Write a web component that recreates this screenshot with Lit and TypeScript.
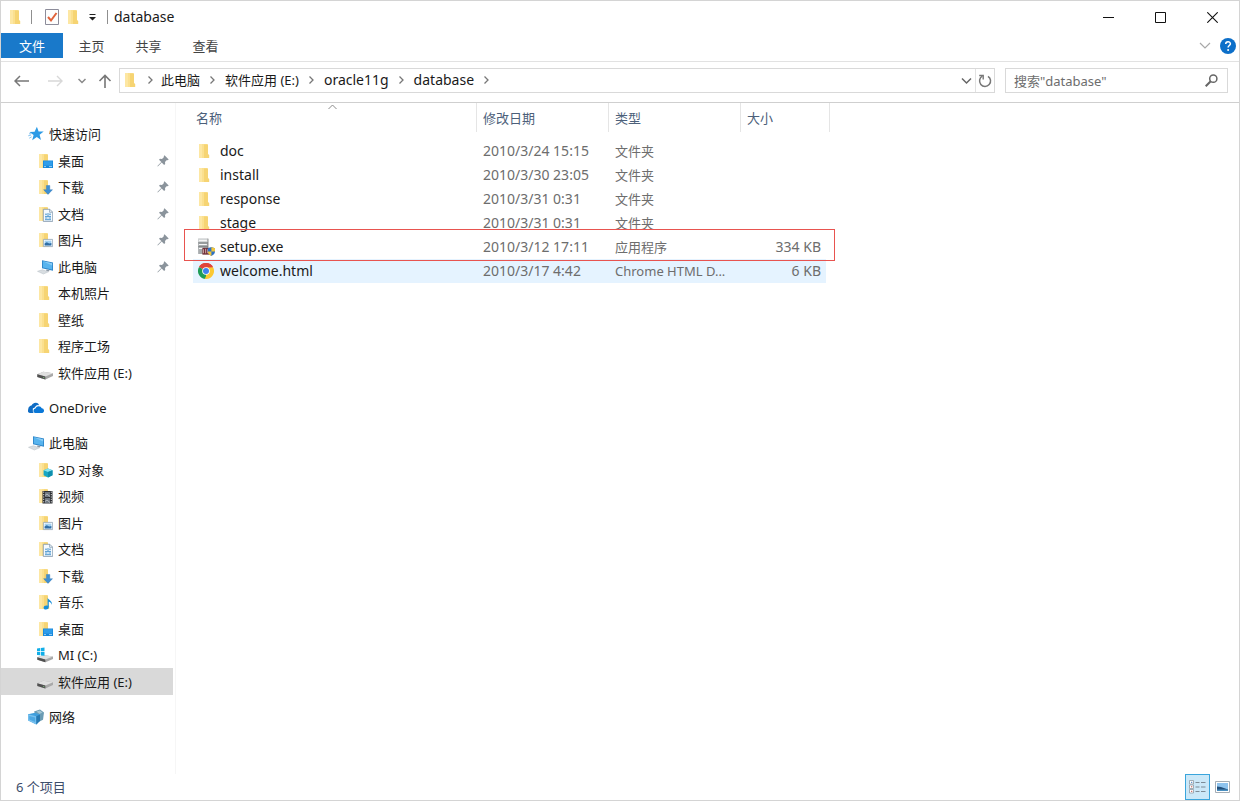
import { LitElement, html, svg, css, nothing, TemplateResult } from "lit";
import { customElement, state } from "lit/decorators.js";
import { classMap } from "lit/directives/class-map.js";

type IconName =
  | "folder" | "desktop" | "download" | "document" | "picture" | "pc" | "drive" | "sysdrive"
  | "star" | "onedrive" | "objects" | "video" | "music" | "network" | "setup" | "chrome";

interface Place { icon: IconName; label: string; pinned?: boolean; current?: boolean; }
interface Group { icon: IconName; label: string; items: Place[]; }
interface Entry { icon: IconName; name: string; date: string; type: string; size: string; boxed?: boolean; hot?: boolean; }

const folderBase = svg`
  <path d="M2 1h8.500v11l1.500 1v2H2z" fill="#fbe08f"/>
  <path d="M2 1h3v14H2z" fill="#fde7a3"/>
  <path d="M7 1.600h4V11l1.200 1v3H7z" fill="#f6d473"/>`;

const glyphs: Record<IconName, TemplateResult> = {
  folder: svg`${folderBase}`,
  desktop: svg`${folderBase}<path d="M6 7.5h10V15H6z" fill="#1487dc"/><path d="M6.7 8.2h8.6v4.4H6.7z" fill="#2f9dea"/><path d="M7 13.6h2M12 13.6h3" stroke="#bfe2fa" stroke-width=".8"/>`,
  download: svg`${folderBase}<path d="M9.4 6.5h3.4v4.2h2.7L11 15.4l-4.4-4.7h2.8z" fill="#3f8fd2" stroke="#2b74b5" stroke-width=".4"/>`,
  document: svg`${folderBase}<path d="M6.3 3.3h6.5l2.9 2.9v9.2H6.3z" fill="#f5fafe" stroke="#7c93a8" stroke-width=".8"/><path d="M12.6 3.4v2.9h3" fill="none" stroke="#7c93a8" stroke-width=".7"/><path d="M8 8.2h2M11 7v3M12 8.2h2M8 10.4h6M8 12h2.5M11.5 12H14M8 13.7h6" stroke="#3b8ccb" stroke-width=".9"/>`,
  picture: svg`${folderBase}<path d="M6.4 7.4h9.2v7.2H6.4z" fill="#fff" stroke="#8fa3b5" stroke-width=".8"/><path d="M7.6 8.6h6.8v4.8H7.6z" fill="#9fd0f2"/><path d="M7.6 13.4v-2l2.2-1.2 2.4 1.4 2.2-.6v2.4z" fill="#2f6da5"/>`,
  pc: svg`<path d="M5 1.2 16 3.4v8.4L5 9.2z" fill="#2e86c9"/><path d="M5.9 2.3l9.2 1.9v6.3L5.9 8.5z" fill="#58b4ee"/><path d="M5.9 2.3l9.2 1.9v2.2z" fill="#8accf5"/><path d="M9.5 10.4l3 .7-.5 1.4-3-.8z" fill="#8e9aa5"/><path d="M.5 12.3l4.8-1.5 6.2 2L6.4 15z" fill="#d8dde1" stroke="#b6bec5" stroke-width=".5"/>`,
  drive: svg`<path d="M.3 9.3l6-2.600 9.700 1.600v2.800L8.400 14.500 .3 11.900z" fill="#a9a9a9"/><path d="M.3 9.3l6-2.600 9.700 1.600-7.700 3.100z" fill="#e0e0e0"/><path d="M.3 9.3l8 2.100V14.500L.3 11.900z" fill="#505050"/><path d="M6.200 12.500l1.200.3" stroke="#8be08b" stroke-width=".8"/>`,
  sysdrive: svg`<path d="M.3 10.3l6-2.4 9.7 1.6v2.4l-7.6 3.3-8.1-2.4z" fill="#a9a9a9"/><path d="M.3 10.3l6-2.4 9.7 1.6-7.7 3.1z" fill="#e0e0e0"/><path d="M.3 10.3l8 2.3v2.6l-8-2.4z" fill="#505050"/><path d="M0 1.5l3.2-.4v3.2H0zM3.9 1l3.6-.5v3.8H3.9zM0 5h3.2v3.3L0 7.9zM3.9 5h3.6v3.8l-3.6-.4z" fill="#11aee8"/>`,
  star: svg`<path d="M8.9.7l1.7 4.8 5.1.1-4.1 3.2 1.4 5.1-4.2-2.9-4.6 3.3L5.6 9 1.4 6l5.200-.3z" fill="#2d9be6"/><path d="M.2 9.8l3-.8M1.200 12.200l2.500-1.400M1 7.800h2" stroke="#7fc0ee" stroke-width=".9"/>`,
  onedrive: svg`<path d="M5.8 10.8a3 3 0 0 1 .3-5.1 4.3 4.3 0 0 0-6 4 2.3 2.3 0 0 0 2 3.3h3.2a4 4 0 0 1 .5-2.2z" fill="#0f6cc4"/><path d="M3.4 6.4A4.2 4.2 0 0 1 10.6 4l.6 1.2C8.4 4.800 7.300 6.500 7 7.700 5.700 7.500 4.600 8.300 4.200 9.400z" fill="#0f6cc4"/><path d="M6.700 13a2.300 2.300 0 0 1 .8-4.500 3.400 3.400 0 0 1 6.300-.2 2.400 2.400 0 0 1 .5 4.700z" fill="#0a78d8"/><path d="M6 12.600a2.800 2.800 0 0 1 .9-4.500A3.700 3.700 0 0 1 12 5.600" fill="none" stroke="#fff" stroke-width=".7"/>`,
  objects: svg`${folderBase}<path d="M11 6.500l4.500 1.700v5L11 15.500l-4.400-2.300v-5z" fill="#18a7c4"/><path d="M11 6.500l4.500 1.700L11 10 6.600 8.200z" fill="#8be4f0"/><path d="M11 10l4.500-1.800v5L11 15.500z" fill="#0f8fae"/>`,
  video: svg`${folderBase}<path d="M5.500 3h10v12.500h-10z" fill="#2c2f33"/><path d="M8 4h5v5H8zM8 10h5v5H8z" fill="#6e7780"/><path d="M6.700 3.600v12M14.300 3.600v12" stroke="#d7d7d7" stroke-dasharray="1.200 1.200"/><path d="M8 7.500l2-1.500 3 2.500M8 13.500l2-1.500 3 2.500" stroke="#c6ccd1" fill="none" stroke-width=".8"/>`,
  music: svg`${folderBase}<path d="M10.600 3.500c.3 2.400 4.900 2.800 4.300 7.300-.6-1.900-1.700-2.800-3.100-3.100v5.400c0 3.200-5.200 3.300-5.200.6 0-2 2.500-2.600 4-1.900z" fill="#168fdb"/>`,
  network: svg`<path d="M6 2.600l6-2.200 4 3-1 7.400-4 2z" fill="#6b9cb4"/><path d="M8.500 2.500l3.300-1 2.700 2-3 1.500z" fill="#a5c6d4"/><path d="M0 5.300l7-1.600 5 1.800v6.300L8.500 15.600 .2 11.500z" fill="#3f9fdd"/><path d="M0 5.300l8.300 2V15.500L.2 11.500z" fill="#77c0ee"/><path d="M8.300 7.300l3.700-1.800v6.300l-3.700 3.700z" fill="#2679b3"/><path d="M1.200 7l5.900 1.400v4.700L1.300 10.600z" fill="#4da8e3"/>`,
  setup: svg`<path d="M1 .6h8.800v13.600H1z" fill="#a8acae"/><path d="M1 .6h8.800v3.600H1z" fill="#d3d6d7"/><path d="M1.800 2.200h7M1.800 5.800h7M1.800 9.200h4" stroke="#f6f6f6"/><path d="M1 4.300h8.800M1 7.800h8.800" stroke="#6c7173" stroke-width=".7"/><path d="M9.800.6v13.600" stroke="#777" stroke-width=".7"/><path d="M4.800 8.800h7v6h-7z" fill="#703139"/><path d="M5.700 10v3.500M7.700 9.600v4M9.500 10v3.500" stroke="#d9b5b8" stroke-width=".8"/><path d="M12.800 8l3.200 1v3c0 2-1.500 3-3.200 3.900-1.700-.9-3.200-1.900-3.200-3.900V9z" fill="#2f72c4"/><path d="M12.800 8l3.200 1v2.900h-3.200zM9.600 11.900h3.200v4c-1.700-.9-3.200-1.900-3.200-4z" fill="#f1c63c"/>`,
  chrome: svg`<path d="M8 8L1.070 4A8 8 0 0 1 14.930 4z" fill="#e0443a"/><path d="M8 8L14.930 4A8 8 0 0 1 8 16z" fill="#fbc934"/><path d="M8 8L8 16A8 8 0 0 1 1.070 4z" fill="#1f9d57"/><path d="M8 4.200h6.930v.4L11 10z" fill="#fbc934"/><path d="M1.070 4L8 4.200H14.930A8 8 0 0 0 1.070 4z" fill="#e0443a"/><path d="M11.300 9.900L8 16l-1.300-.1L9 11z" fill="#fbc934"/><circle cx="8" cy="8" r="3.800" fill="#fff"/><circle cx="8" cy="8" r="3" fill="#3f82ee"/>`,
};

const icon = (name: IconName) =>
  html`<svg class="icon" viewBox="0 0 16 16" aria-hidden="true">${glyphs[name]}</svg>`;

const line = (w: number, h: number, d: string, color: string, weight = 1) =>
  html`<svg width=${w} height=${h} viewBox="0 0 ${w} ${h}" aria-hidden="true"><path d=${d} fill="none" stroke=${color} stroke-width=${weight}></path></svg>`;

const shared = css`
  * { box-sizing: border-box; }
  svg { display: block; flex: none; }
  .icon { width: 16px; height: 16px; }
  button { font: inherit; color: inherit; background: none; border: 0; padding: 0; display: flex; align-items: center; justify-content: center; }
  a { color: inherit; text-decoration: none; }
`;

@customElement("nav-tree")
class NavTree extends LitElement {
  static styles = [shared, css`
    :host { display: block; padding-top: 18px; width: 175px; flex: none; border-right: 1px solid #f6f6f6; overflow: hidden; }
    nav { display: flex; flex-direction: column; gap: 9px; }
    ul { list-style: none; margin: 0; padding: 0; }
    li { height: 26px; margin-right: 2px; }
    li:nth-child(even) { height: 27px; }
    .place { height: 100%; display: flex; align-items: center; gap: 5px; padding: 0 4px 0 36px; color: #1a1a1a; white-space: nowrap; }
    .head { padding-left: 27px; }
    .current { background: #d9d9d9; }
    .label { flex: 1; }
  `];

  private groups: Group[] = [
    { icon: "star", label: "快速访问", items: [
      { icon: "desktop", label: "桌面", pinned: true },
      { icon: "download", label: "下载", pinned: true },
      { icon: "document", label: "文档", pinned: true },
      { icon: "picture", label: "图片", pinned: true },
      { icon: "pc", label: "此电脑", pinned: true },
      { icon: "folder", label: "本机照片" },
      { icon: "folder", label: "壁纸" },
      { icon: "folder", label: "程序工场" },
      { icon: "drive", label: "软件应用 (E:)" },
    ] },
    { icon: "onedrive", label: "OneDrive", items: [] },
    { icon: "pc", label: "此电脑", items: [
      { icon: "objects", label: "3D 对象" },
      { icon: "video", label: "视频" },
      { icon: "picture", label: "图片" },
      { icon: "document", label: "文档" },
      { icon: "download", label: "下载" },
      { icon: "music", label: "音乐" },
      { icon: "desktop", label: "桌面" },
      { icon: "sysdrive", label: "MI (C:)" },
      { icon: "drive", label: "软件应用 (E:)", current: true },
    ] },
    { icon: "network", label: "网络", items: [] },
  ];

  private row(p: Place, head = false) {
    return html`<li><a href="#" class=${classMap({ place: true, head, current: !!p.current })}>
      ${icon(p.icon)}<span class="label">${p.label}</span>
      ${p.pinned ? html`<svg width="12" height="12" viewBox="0 0 12 12" aria-hidden="true">
        <path d="M7.500.3l4.200 4.200-1 .8-.8-.2-1.900 2 .2 2-1.100.9-2.400-2.400L.800 11.500.400 11.100l3.900-4L2 4.800l1-1 2 .2 2-1.900-.3-.8z" fill="#8b949c"/>
      </svg>` : nothing}
    </a></li>`;
  }

  render() {
    return html`<nav>${this.groups.map((g) => html`<ul>
      ${this.row({ icon: g.icon, label: g.label }, true)}${g.items.map((p) => this.row(p))}
    </ul>`)}</nav>`;
  }
}

@customElement("file-list")
class FileList extends LitElement {
  static styles = [shared, css`
    :host { display: block; flex: 1; min-width: 0; padding-left: 17px; color: #6d6d6d; }
    table { border-collapse: separate; border-spacing: 0; table-layout: fixed; width: 637px; }
    .c-name { width: 284px; }
    .c-date { width: 132px; }
    .c-type { width: 132px; }
    .c-size { width: 89px; }
    th { height: 29px; padding: 0 0 0 6px; border-right: 1px solid #e5e5e5; font-weight: 400; color: #4c607a; text-align: left; position: relative; }
    th:first-child { padding-left: 3px; }
    .sort { position: absolute; top: 1px; left: 135px; }
    tbody::before { content: ""; display: block; height: 7px; }
    tr { position: relative; }
    td { height: 24px; padding: 0 0 0 6px; white-space: nowrap; line-height: 20px; }
    .name { padding-left: 4px; color: #1a1a1a; font-size: 14px; }
    .cell { display: flex; align-items: center; gap: 5px; }
    .cell .icon { width: 18px; height: 18px; }
    .cell .folder { width: 16px; height: 16px; margin-right: 2px; }
    .cell .round { width: 16px; height: 16px; margin: 0 1px; }
    .latin { font-size: 14px; }
    .size { font-size: 14px; text-align: right; padding-right: 5px; border-right: 4px solid transparent; background-clip: padding-box; }
    .hot td { background-color: #e5f3ff; }
    .boxed .name::after { content: ""; position: absolute; left: -9px; right: -5px; top: -6px; bottom: -2px; border: 1px solid #e8534f; z-index: 1; pointer-events: none; }
  `];

  private entries: Entry[] = [
    { icon: "folder", name: "doc", date: "2010/3/24 15:15", type: "文件夹", size: "" },
    { icon: "folder", name: "install", date: "2010/3/30 23:05", type: "文件夹", size: "" },
    { icon: "folder", name: "response", date: "2010/3/31 0:31", type: "文件夹", size: "" },
    { icon: "folder", name: "stage", date: "2010/3/31 0:31", type: "文件夹", size: "" },
    { icon: "setup", name: "setup.exe", date: "2010/3/12 17:11", type: "应用程序", size: "334 KB", boxed: true },
    { icon: "chrome", name: "welcome.html", date: "2010/3/17 4:42", type: "Chrome HTML D...", size: "6 KB", hot: true },
  ];

  render() {
    return html`<table>
      <colgroup><col class="c-name"><col class="c-date"><col class="c-type"><col class="c-size"></colgroup>
      <thead><tr>
        <th><button>名称</button><span class="sort">${line(9, 6, "M.5 5L4.5 1L8.500 5", "#8a8a8a")}</span></th>
        <th><button>修改日期</button></th><th><button>类型</button></th><th><button>大小</button></th>
      </tr></thead>
      <tbody>${this.entries.map((e) => html`<tr class=${classMap({ boxed: !!e.boxed, hot: !!e.hot })}>
        <td class="name"><span class="cell"><svg class=${classMap({ icon: true, folder: e.icon === "folder", round: e.icon === "chrome" })} viewBox="0 0 16 16" aria-hidden="true">${glyphs[e.icon]}</svg>${e.name}</span></td>
        <td class="latin">${e.date}</td>
        <td>${e.type}</td>
        <td class="size">${e.size}</td>
      </tr>`)}</tbody>
    </table>`;
  }
}

@customElement("app-root")
class AppRoot extends LitElement {
  static styles = [shared, css`
    :host { display: flex; flex-direction: column; height: 100vh; border: 1px solid #d4d4d4; background: #fff; box-sizing: border-box; overflow: hidden;
      font: 13px/20px "Noto Sans", "Noto Sans CJK SC", sans-serif; color: #1a1a1a; }
    .title { display: flex; align-items: center; height: 32px; padding: 0 1px 0 7px; }
    .title h1 { font-size: 14px; font-weight: 400; margin: 0 0 0 6px; line-height: 20px; flex: 1; }
    .bar { width: 1px; height: 14px; background: #8f8f8f; }
    .bar.first { margin: 0 13px 0 7px; }
    .quick { margin-right: 7px; }
    .drop { margin-right: 11px; }
    .win { width: 52px; height: 32px; }
    .tabs { display: flex; height: 26px; align-items: stretch; }
    .tab { width: 57px; color: #444; }
    .file { width: 62px; background: #1979ca; color: #fff; height: 25px; }
    .help { margin-left: auto; display: flex; align-items: center; gap: 9px; padding-right: 3px; }
    .nav { display: flex; align-items: center; height: 42px; margin-top: 2px; border-top: 1px solid #e2e2e2; border-bottom: 1px solid #cfcfcf; padding: 0 11px 3px 13px; }
    .back { margin-right: 19px; }
    .fwd { margin-right: 15px; }
    .recent { margin-right: 12px; }
    .up { margin-right: 7px; }
    .address { flex: 1; display: flex; align-items: center; height: 25px; border: 1px solid #d9d9d9; padding-left: 3px; }
    .crumbs { display: flex; align-items: center; flex: 1; padding-bottom: 2px; }
    .chev { width: 25px; height: 20px; display: flex; align-items: center; justify-content: center; }
    .chev.first { width: 22px; }
    .latin { font-size: 14px; }
    .open { margin-right: 3px; }
    .refresh { width: 19px; height: 23px; border-left: 1px solid #e2e2e2; }
    .search { display: flex; align-items: center; width: 223px; height: 25px; margin-left: 10px; border: 1px solid #d9d9d9; padding: 0 9px 0 8px; }
    .search input { flex: 1; min-width: 0; border: 0; outline: 0; padding: 0; font: inherit; background: none; height: 22px; }
    .search input::placeholder { color: #6d6d6d; opacity: 1; }
    main { flex: 1; display: flex; min-height: 0; }
    footer { display: flex; align-items: center; height: 26px; padding: 0 4px 0 15px; color: #3c4d6b; }
    .count { flex: 1; }
    .view { width: 25px; height: 26px; }
    .view.on { background: #cbe8f8; border: 1px solid #3aa5dc; }
  `];

  @state() private query = "";

  private chev() {
    return html`<span class="chev">${line(5, 8, "M.5.5L4 4L.5 7.500", "#777", 1.3)}</span>`;
  }

  render() {
    return html`
      <header class="title">
        ${icon("folder")}<span class="bar first"></span>
        <button class="quick" aria-label="属性"><svg width="14" height="16" viewBox="0 0 14 16"><path d="M.5.5h13v15H.5z" fill="#fdfdfd" stroke="#8c8c9a"/><path d="M3 8l3 3.500L11.500 4" fill="none" stroke="#e0623a" stroke-width="2"/></svg></button>
        <button class="quick" aria-label="新建文件夹">${icon("folder")}</button>
        <button class="drop" aria-label="自定义快速访问工具栏"><svg width="7" height="7" viewBox="0 0 7 7"><path d="M.5 0h6v1h-6zM0 3h7L3.500 6.500z" fill="#222"/></svg></button>
        <span class="bar"></span>
        <h1>database</h1>
        <button class="win" aria-label="最小化">${line(11, 11, "M0 5.500H11", "#111")}</button>
        <button class="win" aria-label="最大化">${line(11, 11, "M.5.5H10.500V10.500H.5Z", "#111")}</button>
        <button class="win" aria-label="关闭">${line(11, 11, "M.3.3L10.700 10.700M10.700.3L.3 10.700", "#111", 1.1)}</button>
      </header>
      <div class="tabs">
        <button class="tab file">文件</button>
        ${["主页", "共享", "查看"].map((t) => html`<button class="tab">${t}</button>`)}
        <div class="help">
          <button aria-label="展开功能区">${line(12, 8, "M1 1L6 6L11 1", "#a8a8a8", 1.2)}</button>
          <button aria-label="帮助"><svg width="16" height="16" viewBox="0 0 16 16"><circle cx="8" cy="8" r="8" fill="#0c6fc9"/><path d="M5.700 6c0-3 4.700-3 4.700-.2 0 1.700-2.300 1.800-2.300 3.700" fill="none" stroke="#fff" stroke-width="1.500"/><circle cx="8.100" cy="11.900" r="1" fill="#fff"/></svg></button>
        </div>
      </div>
      <div class="nav">
        <button class="back" aria-label="后退">${line(15, 12, "M1 6H15M6 1L1 6L6 11", "#777", 1.5)}</button>
        <button class="fwd" aria-label="前进">${line(15, 12, "M0 6H14M9 1L14 6L9 11", "#d8d8d8", 1.4)}</button>
        <button class="recent" aria-label="最近浏览的位置">${line(8, 6, "M.5 1L4 4.500L7.500 1", "#888", 1.5)}</button>
        <button class="up" aria-label="上移">${line(14, 14, "M7 14V1.500M1.500 7L7 1.500L12.500 7", "#777", 1.6)}</button>
        <div class="address">
          <div class="crumbs">
            ${icon("folder")}<span class="chev first">${line(5, 8, "M.5.5L4 4L.5 7.500", "#777", 1.3)}</span>
            <a href="#">此电脑</a>${this.chev()}
            <a href="#">软件应用 (E:)</a>${this.chev()}
            <a href="#" class="latin">oracle11g</a>${this.chev()}
            <a href="#" class="latin">database</a>${this.chev()}
          </div>
          <button class="open" aria-label="以前的位置">${line(11, 8, "M1 1.500L5.500 6L10 1.500", "#666", 1.5)}</button>
          <button class="refresh" aria-label="刷新"><svg width="14" height="14" viewBox="0 0 14 14"><path d="M10 2.300A5.500 5.500 0 1 1 4.300 2.200" fill="none" stroke="#777" stroke-width="1.500"/><path d="M1.200 1.500H5.200V5.500" fill="none" stroke="#777" stroke-width="1.400"/></svg></button>
        </div>
        <div class="search">
          <input type="text" aria-label="搜索" placeholder='搜索"database"' .value=${this.query} @input=${(e: Event) => (this.query = (e.target as HTMLInputElement).value)}>
          <svg width="13" height="13" viewBox="0 0 13 13" aria-hidden="true"><circle cx="8.300" cy="4.700" r="3.600" fill="none" stroke="#666" stroke-width="1.500"/><path d="M5.700 7.300L.7 12.300" stroke="#666" stroke-width="2"/></svg>
        </div>
      </div>
      <main><nav-tree></nav-tree><file-list></file-list></main>
      <footer>
        <span class="count">6 个项目</span>
        <button class="view on" aria-label="详细信息"><svg width="17" height="14" viewBox="0 0 17 14"><path d="M.5.5h4v3.500h-4zM.5 5h4v3.500h-4zM.5 9.500h4v3.500h-4z" fill="#fff" stroke="#8f9aa3" stroke-width=".8"/><path d="M2 2.300h1.300" stroke="#3a78c0"/><path d="M2 6.800h1.300M2 11.300h1.300" stroke="#c0504a"/><path d="M6.500 2.500h4M12 2.500h4.500M6.500 7h4M12 7h4.500M6.500 11.500h4M12 11.500h4.500" stroke="#7d8b96"/></svg></button>
        <button class="view" aria-label="大缩略图"><svg width="15" height="12" viewBox="0 0 15 12"><path d="M.5.5h14v11H.5z" fill="#fff" stroke="#a5adb5"/><path d="M2 2h11v8H2z" fill="#8ec3ee"/><path d="M2 5.500l4 .5 7 2.500V10H2z" fill="#22507c"/><path d="M2 8.500h11V10H2z" fill="#4a8fc0"/></svg></button>
      </footer>`;
  }
}
